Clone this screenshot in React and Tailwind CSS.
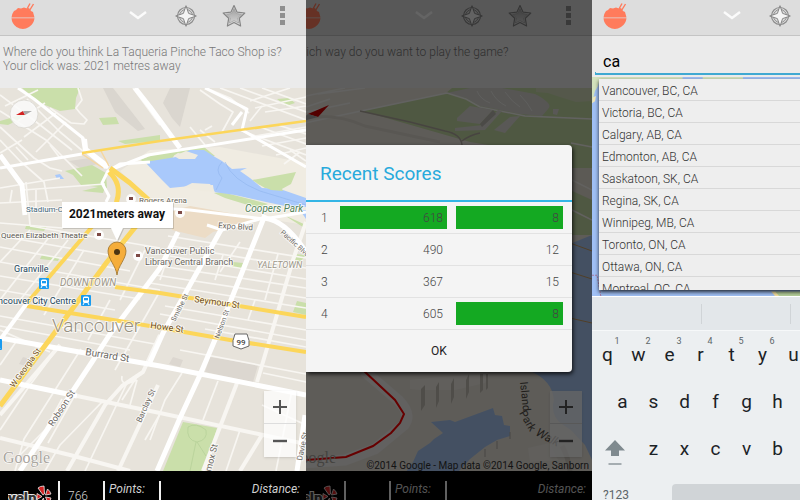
import React from "react";

const YELLOW = "#fcd65a";
const ROAD = "#ffffff";
const MINOR = "#f8f6f2";
const WATER = "#a9c9fb";
const PARK = "#cadfaa";

function Bowl() {
  return (
    <svg className="h-[28px] w-[26px] shrink-0" viewBox="0 0 26 28" aria-hidden="true">
      <path d="M17 7 L20 1.500 M19.500 8.500 L23.500 2" stroke="#ff7b5c" strokeWidth="1.400" fill="none" />
      <path d="M1.500 15.500 A12 12 0 0 1 4 9 L6 8 L8 6 L11 6.500 L14 5.500 L17 6.500 L19 6 L21 9 L23 10 L24.500 15.500 Z" fill="#ff7b5c" />
      <path d="M1.500 16.200 H24.500 A12 12 0 0 1 19 25 Q13 29 6.500 25 A12 12 0 0 1 1.500 16.200 Z" fill="#ff7b5c" />
    </svg>
  );
}

function CompassIcon() {
  return (
    <svg className="h-[22px] w-[22px]" viewBox="0 0 22 22" aria-hidden="true">
      <circle cx="11" cy="11" r="8.500" fill="none" stroke="#8c8c8c" strokeWidth="1.200" />
      <circle cx="11" cy="11" r="6.500" fill="none" stroke="#8c8c8c" strokeWidth="1" />
      <path d="M11 0.700 L13.600 8.400 L21.300 11 L13.600 13.600 L11 21.300 L8.400 13.600 L0.700 11 L8.400 8.400 Z" fill="#f4f4f4" stroke="#7d7d7d" strokeWidth="0.900" />
    </svg>
  );
}

function StarIcon() {
  return (
    <svg className="h-[24px] w-[24px]" viewBox="0 0 24 24" aria-hidden="true">
      <defs>
        <linearGradient id="starFill" x1="0" y1="0" x2="0" y2="1">
          <stop offset="0" stopColor="#a0a0a0" />
          <stop offset="1" stopColor="#d2d2d2" />
        </linearGradient>
      </defs>
      <path d="M12 1.500 L15.100 8.200 L22.800 9 L17.300 14.300 L18.600 22 L12 18.500 L5.400 22 L6.700 14.300 L1.200 9 L8.900 8.200 Z" fill="#dadada" stroke="#858585" strokeWidth="1.200" strokeLinejoin="round" />
      <path d="M12 4.500 L14.300 9.500 L19.600 10.200 L15.700 13.900 L16.600 19 L12 16.600 L7.400 19 L8.300 13.900 L4.400 10.200 L9.700 9.500 Z" fill="url(#starFill)" stroke="#959595" strokeWidth="0.600" />
    </svg>
  );
}

function ActionBar() {
  return (
    <header className="flex h-9 shrink-0 items-center border-b border-[#c4c4c4] bg-[#dddddd] pb-1 pl-2.5">
      <Bowl />
      <div className="ml-auto flex">
        <button aria-label="Expand" className="flex w-12 items-center justify-center">
          <svg className="h-[9px] w-[18px]" viewBox="0 0 18 9" aria-hidden="true">
            <path d="M1 1 L9 7 L17 1" fill="none" stroke="#fbfbfb" strokeWidth="2.400" />
          </svg>
        </button>
        <button aria-label="Locate" className="flex w-12 items-center justify-center"><CompassIcon /></button>
        <button aria-label="Favourites" className="flex w-12 items-center justify-center"><StarIcon /></button>
        <button aria-label="More options" className="flex w-12 flex-col items-center justify-center gap-0.5">
          <span className="size-[5px] bg-[#8f8f8f]" />
          <span className="size-[5px] bg-[#8f8f8f]" />
          <span className="size-[5px] bg-[#8f8f8f]" />
        </button>
      </div>
    </header>
  );
}

function Prompt({ children }) {
  return (
    <p className="h-[52px] shrink-0 bg-[#ebebeb] px-[3px] pt-[9px] text-[12px] font-light leading-[14px] text-[#777]">
      {children}
    </p>
  );
}

function ZoomControls() {
  return (
    <div className="absolute right-2.5 bottom-[14px] flex w-8 flex-col divide-y divide-[#ddd] bg-white/75 shadow-sm">
      <button aria-label="Zoom in" className="flex h-[33px] items-center justify-center">
        <svg className="size-4" viewBox="0 0 16 16" aria-hidden="true"><path d="M8 1 V15 M1 8 H15" stroke="#555" strokeWidth="2" /></svg>
      </button>
      <button aria-label="Zoom out" className="flex h-[33px] items-center justify-center">
        <svg className="size-4" viewBox="0 0 16 16" aria-hidden="true"><path d="M1 8 H15" stroke="#555" strokeWidth="2.400" /></svg>
      </button>
    </div>
  );
}

function ScoreBar({ attempts, points, distance }) {
  return (
    <footer className="flex h-[29px] shrink-0 items-start overflow-hidden bg-black pt-[10px] text-[12px] text-[#d0d0d0]">
      <div className="w-[58px] shrink-0 pl-2">
        <svg className="block h-[28px] w-[44px]" viewBox="0 0 44 28" role="img" aria-label="yelp">
          <text x="0" y="22" fontFamily="Roboto, sans-serif" fontWeight="900" fontSize="15" fill="#333" stroke="#e8e8e8" strokeWidth="2" paintOrder="stroke">yelp</text>
          <g fill="#d32323" stroke="#f0f0f0" strokeWidth="0.800" transform="translate(0 4)">
            <path d="M35 10 L30 3 Q32 1 36 1 L36.500 9 Z" />
            <path d="M37.500 10 L39.500 4 Q42 6 43 9 Z" />
            <path d="M37.500 12 L43 13 Q42 17 40 18 Z" />
            <path d="M35.500 13 L36.500 20 L32 18 Z" />
            <path d="M34 11.500 L29 14.500 L29 8.500 Z" />
          </g>
        </svg>
      </div>
      <div className="h-10 w-[45px] shrink-0 border-l-2 border-[#f0f0f0] pt-2 pl-2 text-[12px] leading-[14px] font-light">{attempts}</div>
      <div className="h-10 w-[56px] shrink-0 border-l-2 border-[#f0f0f0] pl-1 leading-[17px]">
        <div className="italic">Points:</div>
        <div className="font-bold">{points}</div>
      </div>
      <div className="h-10 grow border-l-2 border-[#f0f0f0] pr-1.5 text-right leading-[17px]">
        <div className="italic">Distance:</div>
        <div className="pr-2 font-bold">{distance}</div>
      </div>
    </footer>
  );
}

function Lines({ list, color, width }) {
  return (
    <g fill="none" stroke={color} strokeWidth={width} strokeLinejoin="round">
      {list.map((d) => <path key={d} d={d} />)}
    </g>
  );
}

const thinStreets = [
  "M0 111 L46 140 L82 176", "M0 127 L34 158 L50 168 L62 171", "M0 95 L35 121 L72 150", "M0 140 L20 161 L44 182 L48 202",
  "M27 99 L60 132 L84 152", "M38 90 L5 106", "M45 103 L18 121", "M56 113 L24 137", "M66 122 L36 152",
  "M28 160 L16 147", "M60 158 L50 145", "M0 188 L60 178", "M23 190 L105 184", "M0 203 L62 200", "M36 190 V213", "M26 182 L30 225",
  "M12 190 L10 202", "M0 153 L22 140", "M78 88 L82 100 L76 108 L80 113 L87 120 L84 124 L71 123",
  "M71 123 L50 108", "M133 88 L160 125", "M190 127 L205 145", "M200 130 L215 142", "M205 130 L212 126",
  "M222 132 L233 112 L220 104 L200 90", "M250 121 L262 106", "M240 130 L306 155", "M260 127 L306 144", "M278 125 L306 134",
  "M206 88 L230 98 L249 113", "M220 88 L306 120", "M240 88 L306 112", "M262 88 L306 104", "M255 108 L306 97", "M250 101 L290 88",
  "M265 112 L306 106", "M251 137 L306 127", "M262 146 L306 138", "M276 155 L306 148", "M290 150 L306 161", "M284 164 L300 152",
  "M0 223 L62 228", "M0 236 L120 257", "M30 226 L160 248", "M0 247 L130 271", "M0 262 L160 290", "M0 276 L140 299",
  "M0 290 L115 310", "M0 316 L160 345", "M0 326 L130 350",
  "M168 236 L306 258", "M172 246 L306 268", "M170 256 L250 270 L306 279", "M160 266 L306 288", "M155 275 L306 298",
  "M150 283 L306 308", "M165 306 L306 330", "M160 314 L306 340", "M205 329 L306 347", "M180 350 L306 374",
  "M0 330 L50 352", "M60 345 L30 385 L0 430", "M81 349 L24 439 L15 471", "M62 399 L45 430 L20 455", "M75 395 L48 443",
  "M104 400 L60 445 L45 471", "M126 385 L85 471", "M138 375 L122 400", "M122 376 Q120 388 137 380", "M137 380 L130 405",
  "M182 373 L165 400 L150 440", "M218 381 L203 420", "M240 430 L226 471", "M263 373 L306 382", "M262 405 L306 425",
  "M292 390 L276 471", "M160 414 L145 440", "M176 232 L160 280", "M240 242 L220 272", "M223 255 L215 280", "M278 254 L265 300",
  "M255 300 L248 320", "M84 250 L44 315", "M68 240 L20 300", "M50 236 L0 300", "M30 230 L0 262",
  "M160 291 L115 370", "M0 365 L18 339", "M145 250 L120 300", "M110 300 L88 340",
];

function LabelText({ x, y, size = 9, rotate, fill = "#6b675f", children, ...rest }) {
  return (
    <text x={x} y={y} fontSize={size} fill={fill} transform={rotate ? `rotate(${rotate} ${x} ${y})` : undefined} {...rest}>
      {children}
    </text>
  );
}

function TrainStop({ x, y }) {
  return (
    <g transform={`translate(${x} ${y})`}>
      <rect width="10" height="11" rx="1" fill="#1a9bef" />
      <rect x="2" y="1.500" width="6" height="6.500" rx="1.500" fill="#fff" />
      <rect x="3" y="3" width="4" height="2.300" fill="#1a9bef" />
      <path d="M3 8 L2 10 M7 8 L8 10" stroke="#fff" />
    </g>
  );
}

function PlaceDot({ x, y }) {
  return (
    <g>
      <circle cx={x} cy={y} r="5" fill="#fff" fillOpacity="0.900" />
      <path d={`M${x - 2} ${y - 2} h4 v3 h-4 Z`} fill="#7d4a45" />
    </g>
  );
}

function VancouverMap() {
  return (
    <svg className="block size-full" viewBox="0 88 306 383" preserveAspectRatio="xMidYMid slice" fontFamily="Roboto, sans-serif" role="img" aria-label="Map of downtown Vancouver">
      <rect y="88" width="306" height="383" fill="#e7e3db" />
      <path d="M22 88 H80 L76 98 L75 109 L60 111 L40 103 Z" fill={PARK} />
      <path d="M0 121 L14 117 L34 110 L24 117 L8 125 L0 124 Z" fill={PARK} />
      <path d="M99 118 L116 117 L119 124 L103 125 Z M118 141 L160 135 V141 L125 144 Z M277 99 L289 98 L295 103 L286 106 Z" fill={PARK} />
      <path d="M103 88 L113 88 L145 129 L138 131 L115 112 Z M170 88 L190 88 L180 127 L172 118 L163 103 Z" fill="#dad6cf" />
      <path d="M69 161 L90 158 L98 164 L80 168 Z" fill="#dcd7d0" />
      <path d="M120 171 L150 150 L220 147 L306 163 V225 L240 215 L160 205 L148 198 Z" fill="#f0ece2" />
      <path d="M65 171 L92 165 L106 173 L107 188 L81 185 L73 175 Z M82 191 L106 185 L103 193 Z" fill={PARK} />
      <path d="M150 154 L181 151 L190 147 L204 147 L215 156 L200 158 L178 153 L170 158 L150 162 Z M140 160 L158 153 L176 153 L171 160 L145 162 Z" fill={PARK} />
      <path d="M252 180 L296 172 L291 184 L280 190 L265 188 Z M214 193 L222 192 L268 204 L258 208 L225 198 Z" fill={PARK} />
      <path d="M145 162 L176 157 L190 150 L204 150 L215 157 L222 161 L232 169 L247 168 L240 171 L250 178 L262 188 L280 189 L306 198 V207 L285 206 L266 202 L235 195 L214 192 L213 185 L190 186 L170 188 L162 180 Z" fill={WATER} />
      <path d="M174 156 L186 151 L198 155 L195 159 L179 159 Z M184 187 L192 183 L210 184 L215 192 L202 191 Z" fill="#efebe0" />
      <path d="M255 180 L280 185 L283 191 L271 190 L258 184 Z" fill={PARK} />
      <path d="M222 162 Q214 170 222 178 L216 190 M225 162 Q232 180 260 191 L306 205" fill="none" stroke="#93b8ef" strokeWidth="0.700" />
      <path d="M171 211 L190 206 L235 214 L263 219 L213 232 L205 238 L172 230 Z" fill="#ecdcc6" />
      <path d="M55 175 L60 174 L64 179 L57 179 Z" fill={WATER} />
      <path d="M300 210 H306 V219 Z" fill={WATER} />
      <path d="M284 215 L306 225 V229 Z M26 226 L47 226 L44 231 L25 229 Z M42 255 L60 257 L58 261 L40 259 Z M233 262 L243 263 L241 269 L231 267 Z M293 254 L306 255 L300 262 L292 259 Z M297 301 L306 303 V315 L293 312 Z" fill={PARK} />
      <path d="M210 357 L258 365 L253 382 L205 372 Z M23 357 L33 360 L29 367 L19 364 Z M173 357 L183 360 L180 367 L169 364 Z" fill="#dcd7d0" />
      <path d="M183 422 L217 428 L205 471 H163 Z" fill={PARK} />
      <path d="M188 427 Q186 440 197 442 Q208 440 206 430 Q196 422 188 427 M196 442 L190 471 M197 442 L206 456" fill="none" stroke="#b3ce96" strokeWidth="0.700" />

      <Lines list={thinStreets} color={MINOR} width={1.7} />
      <Lines color={MINOR} width={4} list={["M0 438 L70 455 L130 471", "M158 385 L118 471", "M67 471 L105 405 L122 386 L143 372 L160 335", "M203 471 L237 383", "M257 382 L271 335 L293 260 L306 222", "M240 471 L262 435", "M0 415 L60 345", "M77 396 L160 413 L263 435 L306 444"]} />
      <Lines color={ROAD} width={5} list={["M0 155 L22 185 L25 215", "M0 338 L85 353 L160 366 L306 395", "M0 380 L77 396", "M20 471 L92 362 L110 334 L160 268 L178 232", "M222 228 L163 333 L150 362", "M265 215 L217 335 L200 375 L180 418 L157 471", "M305 415 L297 471", "M264 218 Q285 220 306 252"]} />
      <Lines color={ROAD} width={3} list={["M145 207 L190 210 L264 219 L306 212", "M207 225 L222 230 L263 218", "M0 168 L82 154", "M18 88 L34 99 L83 138 L86 150 L108 168", "M150 162 L120 164 L108 171 L102 183 L109 196 L106 202", "M110 170 L148 155 L306 130", "M205 88 L247 109 L242 130 L306 167", "M242 112 L232 125"]} />
      <Lines color={ROAD} width={5} list={["M135 88 L150 107 L180 148"]} />
      <path d="M81 138 L87 139 L88 148 L110 165 L105 169 L83 151 Z" fill={ROAD} />
      <path d="M82 154 L103 168 M101 151 L109 166" fill="none" stroke="#f5d6a0" strokeWidth="1.500" />
      <Lines color={YELLOW} width={2.5} list={["M82 153 L160 141 L306 121"]} />
      <Lines color={YELLOW} width={5} list={["M110 168 L130 183 L150 201", "M109 172 Q122 184 117 200 L112 225", "M137 225 L107 262 L53 335 L0 406"]} />
      <Lines color={YELLOW} width={4} list={["M96 222 L27 303", "M115 287 L160 293 L306 317", "M27 306 L150 326 L230 340 L306 352"]} />
      <path d="M27 303 L0 340" stroke={ROAD} strokeWidth="4" />

      <PlaceDot x={131} y={199} />
      <PlaceDot x={180} y={213} />
      <PlaceDot x={99} y={235} />
      <PlaceDot x={138} y={256} />
      <g stroke="#ffffff" strokeWidth="2" strokeOpacity="0.700" paintOrder="stroke" strokeLinejoin="round">
        <LabelText x={139} y={203} size={8}>Rogers Arena</LabelText>
        <LabelText x={26} y={212} size={8} fill="#44667a">Stadium-C</LabelText>
        <LabelText x={245} y={212} size={10} fill="#53835c" fontStyle="italic">Coopers Park</LabelText>
        <LabelText x={1} y={238} size={8} fill="#5c5952">Queen Elizabeth Theatre</LabelText>
        <LabelText x={14} y={272} size={9} fill="#24475c">Granville</LabelText>
        <LabelText x={76} y={304} size={9} fill="#24475c" textAnchor="end">Vancouver City Centre</LabelText>
        <LabelText x={60} y={286} size={10} fill="#9d9789" fontStyle="italic">DOWNTOWN</LabelText>
        <LabelText x={257} y={268} fill="#9d9789" fontStyle="italic">YALETOWN</LabelText>
        <LabelText x={52} y={332} size={19} fill="#968f7f" fontWeight="300">Vancouver</LabelText>
        <LabelText x={145} y={254}>Vancouver Public</LabelText>
        <LabelText x={145} y={265}>Library Central Branch</LabelText>
        <LabelText x={218} y={228} size={8} rotate={4}>Expo Blvd</LabelText>
        <LabelText x={280} y={233} size={7} rotate={42}>Pacific Blvd</LabelText>
        <LabelText x={194} y={302} rotate={8} fill="#6f4d18">Seymour St</LabelText>
        <LabelText x={150} y={328} rotate={8} fill="#6f4d18">Howe St</LabelText>
        <LabelText x={175} y={322} size={7} rotate={-63}>Smithe St</LabelText>
        <LabelText x={219} y={339} size={7} rotate={-70}>Nelson St</LabelText>
        <LabelText x={85} y={355} size={10} rotate={9}>Burrard St</LabelText>
        <LabelText x={14} y={388} size={8} rotate={-54} fill="#6f4d18">W Georgia St</LabelText>
        <LabelText x={53} y={427} rotate={-57}>Robson St</LabelText>
        <LabelText x={141} y={423} size={8} rotate={-66}>Barclay St</LabelText>
        <LabelText x={211} y={472} rotate={-76}>mox St</LabelText>
        <LabelText x={302} y={461} size={8} rotate={-78}>Davie St</LabelText>
      </g>
      <TrainStop x={39} y={278} />
      <TrainStop x={81} y={295} />
      <TrainStop x={-8} y={339} />
      <path d="M235 334 H247 Q250 341 249 346 L241 349 L233 346 Q232 341 235 334 Z" fill="#fff" stroke="#666" />
      <LabelText x={241} y={345} size={8} fill="#444" textAnchor="middle" fontWeight="500">99</LabelText>

      <path d="M62 202 H173 V228 H123 L117 241 L111 228 H62 Z" fill="#000" opacity="0.150" transform="translate(1 1)" />
      <path d="M62 202 H173 V228 H123 L117 241 L111 228 H62 Z" fill="#fff" />
      <text x="117" y="218" textAnchor="middle" fontSize="12" fontWeight="700" fill="#111">2021meters away</text>
      <path d="M117 275 C116 266 108 259 108 251 A9 9 0 0 1 126 251 C126 259 118 266 117 275 Z" fill="#f5ad3a" stroke="#9d7127" strokeWidth="0.800" />
      <circle cx="117" cy="252" r="3" fill="#4c3412" />

      <circle cx="24" cy="114" r="14" fill="#fafafa" fillOpacity="0.850" stroke="#d8d5cf" strokeWidth="0.800" />
      <path d="M16 115 L23 111 L25 115 Z" fill="#d32323" />
      <path d="M32 111 L23 111 L25 115 Z" fill="#aaa" />
      <text x="3" y="463" fontFamily="Liberation Serif, serif" fontSize="16" fill="#aaa69f" stroke="#fff" strokeWidth="1" paintOrder="stroke">Google</text>
    </svg>
  );
}

function IslandMap() {
  return (
    <svg className="block size-full" viewBox="286 88 306 383" preserveAspectRatio="xMaxYMid slice" fontFamily="Roboto, sans-serif" role="img" aria-label="Map of the island park">
      <rect x="286" y="88" width="306" height="383" fill="#ebe6dd" />
      <path d="M362 111 L446 93 L452 88 H592 V235 H560 L520 150 L470 142 Z" fill="#c6dba6" />
      <path d="M447 93 L470 88 H502 L535 94 Q554 104 548 109 L542 116 L520 114 L480 106 L466 98 Z" fill="#d9d7d3" />
      <path d="M536 88 H592 V101 L576 102 L560 97 L548 93 L536 92 Z" fill="#d4dcbc" />
      <path d="M286 127 L361 111 L447 93 L466 99 L480 107 L525 116 L592 119 M345 88 L306 96 M318 94 L365 88 M306 112 L350 103 M330 99 L306 107" fill="none" stroke="#f6f5f2" strokeWidth="1.500" />
      <path d="M477 91 Q480 99 490 103 M491 91 Q496 101 506 106 M505 92 Q512 102 520 107 M520 95 Q528 103 532 111" fill="none" stroke="#f3f2ef" strokeWidth="0.800" />
      <path d="M457 118 L470 106 L493 110 L480 124 L457 121 Z M455 128 L483 125 L498 110 L502 111 L485 130 L455 131 Z M494 130 L510 117 L520 116 L505 133 Z M553 109 L559 109 L557 115 L553 114 Z" fill="#dedcd6" />
      <path d="M480 124 L493 110 L496 114 L482 127 Z" fill="#bbb8b1" />
      <path d="M360 111 L410 122 L445 131 Q461 134 462 145 M462 141 Q470 135 480 133" fill="none" stroke="#b1aaa0" strokeWidth="1.500" />
      <path d="M306 117 Q340 114 365 126 L440 142" fill="none" stroke="#dfd9cf" strokeWidth="3" />
      <path d="M570 168 H592 V200 L570 190 Z" fill="#e5e0d4" />
      <path d="M565 246 L592 235 V460 L585 445 L571 430 L562 424 Q550 415 554 400 Q552 380 530 371 H565 Z" fill="#aac9f5" />
      <path d="M570 243 L592 251 M570 272 L592 279 M570 318 L592 323" stroke="#c89c63" strokeWidth="1" />
      <path d="M571 143 L592 147 M572 180 L592 190 M572 210 L592 220" stroke="#f5f3ee" strokeWidth="1.500" />

      <path d="M364 371 L398 400 Q412 414 404 425 L375 449 L345 460 L286 464" fill="none" stroke="#f4f2ef" strokeWidth="11" />
      <path d="M364 371 L395 400 L404 414 L400 423 L391 433 L373 446 L346 457 L306 460 L286 461" fill="none" stroke="#ff0000" strokeWidth="2" />
      <path d="M410 380 L440 377 L490 374 L485 383 L455 390 L420 390 L410 389 Z" fill="#f2eee6" />
      <path d="M421 389 L425 385 V405 L421 411 Z M436 387 L439 382 V401 L436 408 Z M451 384 L454 378 V397 L451 404 Z M466 380 L469 374 V392 L466 399 Z M480 374 H483 V390 L480 393 Z M486 374 H488 V388 L486 390 Z" fill="#c5c0b7" />
      <path d="M431 422 L450 420 L455 422 L493 408 L495 415 L502 416 L504 425 L510 426 V436 L497 440 L485 447 L470 459 L458 472 H406 L413 462 L418 451 L430 443 L434 439 L443 433 Z" fill="#aac9f5" />
      <path d="M485 449 V457 M497 441 V449 M510 432 V439" stroke="#b5b0a8" strokeWidth="1" />
      <path d="M528 448 L550 443 L558 460 L530 462 Z" fill="#f2eee6" />
      <path d="M562 446 Q568 456 570 471" fill="none" stroke="#d5cfc5" strokeWidth="5" />
      <g fontSize="11" fill="#514d46">
        <text x="520" y="382" transform="rotate(84 520 382)">Island</text>
        <text x="519" y="413" transform="rotate(60 519 413)">Park</text>
        <text x="535" y="435" fontStyle="italic" fontSize="12" transform="rotate(28 535 435)">Walk</text>
      </g>

      <path d="M308 114 L329 105 L318 117 Z" fill="#d00000" />
      <path d="M308 114 L318 117 L300 122 L302 119 Z" fill="#aaa" />
      <text x="289" y="463" fontFamily="Liberation Serif, serif" fontSize="16" fill="#aaa69f">Google</text>
      <text x="589" y="469" fontSize="10" textAnchor="end" fill="#333">©2014 Google - Map data ©2014 Google, Sanborn</text>
    </svg>
  );
}

const scores = [
  { n: 1, points: 618, tries: 8, bestPoints: true, bestTries: true },
  { n: 2, points: 490, tries: 12 },
  { n: 3, points: 367, tries: 15 },
  { n: 4, points: 605, tries: 8, bestTries: true },
];

function ScoreCell({ value, best }) {
  return (
    <td className="p-0 pr-[9px]">
      <div className={best ? "h-[23px] bg-[#14a922] pr-1 text-right leading-[24px]" : "h-[23px] pr-1 text-right leading-[24px]"}>{value}</div>
    </td>
  );
}

function ScoresDialog() {
  return (
    <div className="absolute inset-0 flex items-center bg-black/60 pt-[17px] pr-5">
      <section role="dialog" aria-labelledby="scores-title" className="w-full rounded-r-sm bg-[#f4f4f4] shadow-[1px_2px_4px_rgba(0,0,0,0.8)]">
        <h2 id="scores-title" className="border-b-2 border-[#33b5e5] px-[14px] pt-[3px] text-[19px] leading-[52px] text-[#28aadc]">Recent Scores</h2>
        <table className="w-full table-fixed border-collapse text-[12px] font-light text-[#444]">
          <tbody>
            {scores.map((s) => (
              <tr key={s.n} className="h-8 border-b border-[#e2e2e2]">
                <td className="w-[34px] p-0 pl-[15px]">{s.n}</td>
                <ScoreCell value={s.points} best={s.bestPoints} />
                <ScoreCell value={s.tries} best={s.bestTries} />
              </tr>
            ))}
          </tbody>
        </table>
        <button className="block h-[42px] w-full text-[12px] text-[#222]">OK</button>
      </section>
    </div>
  );
}

const cities = [
  "Vancouver, BC, CA", "Victoria, BC, CA", "Calgary, AB, CA", "Edmonton, AB, CA", "Saskatoon, SK, CA",
  "Regina, SK, CA", "Winnipeg, MB, CA", "Toronto, ON, CA", "Ottawa, ON, CA", "Montreal, QC, CA",
];

function CitySearch() {
  return (
    <div className="flex h-[260px] shrink-0 flex-col">
      <div className="h-[41px] shrink-0 bg-[#ebebeb] pl-[3px]">
        <input aria-label="City" defaultValue="ca" className="block h-9 w-full bg-transparent pt-3.5 pl-2 text-[16px] text-black outline-none" />
        <div className="h-[3px] border-b-2 border-l border-[#3fa9d2]" />
      </div>
      <div className="relative grow overflow-hidden">
        <svg className="absolute inset-0 size-full" viewBox="0 0 306 219" preserveAspectRatio="xMinYMin slice" aria-hidden="true">
          <rect width="306" height="219" fill="#a0c0f5" />
          <path d="M0 0 H90 V2 H8 L6 9 L3 14 L0 26 Z M110 0 H150 V2 H110 Z" fill="#d3e2bd" />
          <path d="M1 20 L4 19 L3 24 L0 26 Z" fill="#f2e7b8" />
          <path d="M0 197 H5 L9 219" fill="none" stroke="#a8799e" strokeDasharray="2 1" />
          <path d="M180 213 H306 V219 H186 Z" fill="#b5cf9a" />
          <path d="M178 213 H182 L187 219 H183 Z" fill="#f2dfa0" />
        </svg>
        <ul className="relative mt-0.5 ml-[7px] h-[211px] overflow-hidden bg-[#eeeeee] text-[12px] font-light text-[#333] shadow-[0_2px_4px_rgba(0,0,0,0.8)]">
          {cities.map((city) => (
            <li key={city} className="h-[22px] border-b border-[#d8d8d8] pl-[3px] leading-[24px]">{city}</li>
          ))}
        </ul>
      </div>
    </div>
  );
}

function KeyRow({ letters, hints }) {
  return letters.map((letter, i) => (
    <button key={letter} className="relative h-12 w-[31px] shrink-0 text-[19px] leading-[48px]">
      {letter}
      {hints && <span className="absolute top-[5px] right-0 w-3 text-center text-[9px] leading-[10px] text-[#5c6569]">{hints[i]}</span>}
    </button>
  ));
}

function Keyboard() {
  return (
    <div className="flex grow flex-col overflow-hidden border-t border-white bg-[#eceff1] text-[#1b2226]">
      <div className="flex h-[34px] shrink-0 items-center border-b border-[#f6f8f9] bg-[#e3e7ea]">
        <span className="h-5 w-[110px] border-r border-[#d0d4d7]" />
        <span className="h-5 w-[89px] border-r border-[#d0d4d7]" />
      </div>
      <div className="flex h-[47px] shrink-0"><KeyRow letters={["q", "w", "e", "r", "t", "y", "u", "i", "o", "p"]} hints="1234567890" /></div>
      <div className="flex h-[47px] shrink-0 pl-[15px]"><KeyRow letters={["a", "s", "d", "f", "g", "h", "j", "k", "l"]} /></div>
      <div className="flex h-[47px] shrink-0">
        <button aria-label="Shift" className="flex w-[46px] shrink-0 items-center justify-center pt-2">
          <svg className="h-[26px] w-5" viewBox="0 0 20 26" aria-hidden="true">
            <path d="M10 0 L20 10.500 H14 V16 H6 V10.500 H0 Z" fill="#7f8a8f" />
            <path d="M3.500 24 H16.500" stroke="#7f8a8f" strokeWidth="1.300" />
          </svg>
        </button>
        <KeyRow letters={["z", "x", "c", "v", "b", "n", "m"]} />
      </div>
      <div className="flex h-12 shrink-0 items-start pt-3">
        <button className="w-[80px] shrink-0 pl-[11px] text-left text-[12px] leading-[22px] text-[#5c6569]">?123</button>
        <button aria-label="Space" className="h-9 grow rounded-sm bg-[#d0d4d7]" />
      </div>
    </div>
  );
}

export default function App() {
  return (
    <main className="grid h-screen min-h-[500px] grid-cols-[306fr_286fr_208fr] overflow-hidden font-['Roboto',sans-serif]">
      <div className="flex min-w-0 flex-col overflow-hidden">
        <ActionBar />
        <Prompt>Where do you think La Taqueria Pinche Taco Shop is?<br />Your click was: 2021 metres away</Prompt>
        <div className="relative min-h-0 grow overflow-hidden">
          <VancouverMap />
          <ZoomControls />
        </div>
        <ScoreBar attempts="766" points="1" distance="0.01" />
      </div>

      <div className="relative flex min-w-0 justify-end overflow-hidden">
        <div className="flex w-[calc(100%+20px)] shrink-0 flex-col">
          <ActionBar />
          <Prompt>Which way do you want to play the game?</Prompt>
          <div className="relative min-h-0 grow overflow-hidden">
            <IslandMap />
            <ZoomControls />
          </div>
          <ScoreBar attempts="" points="2298" distance="2.001" />
        </div>
        <ScoresDialog />
      </div>

      <div className="min-w-0 overflow-hidden">
        <div className="flex h-full w-[308px] min-w-full flex-col">
          <ActionBar />
          <CitySearch />
          <Keyboard />
        </div>
      </div>
    </main>
  );
}
